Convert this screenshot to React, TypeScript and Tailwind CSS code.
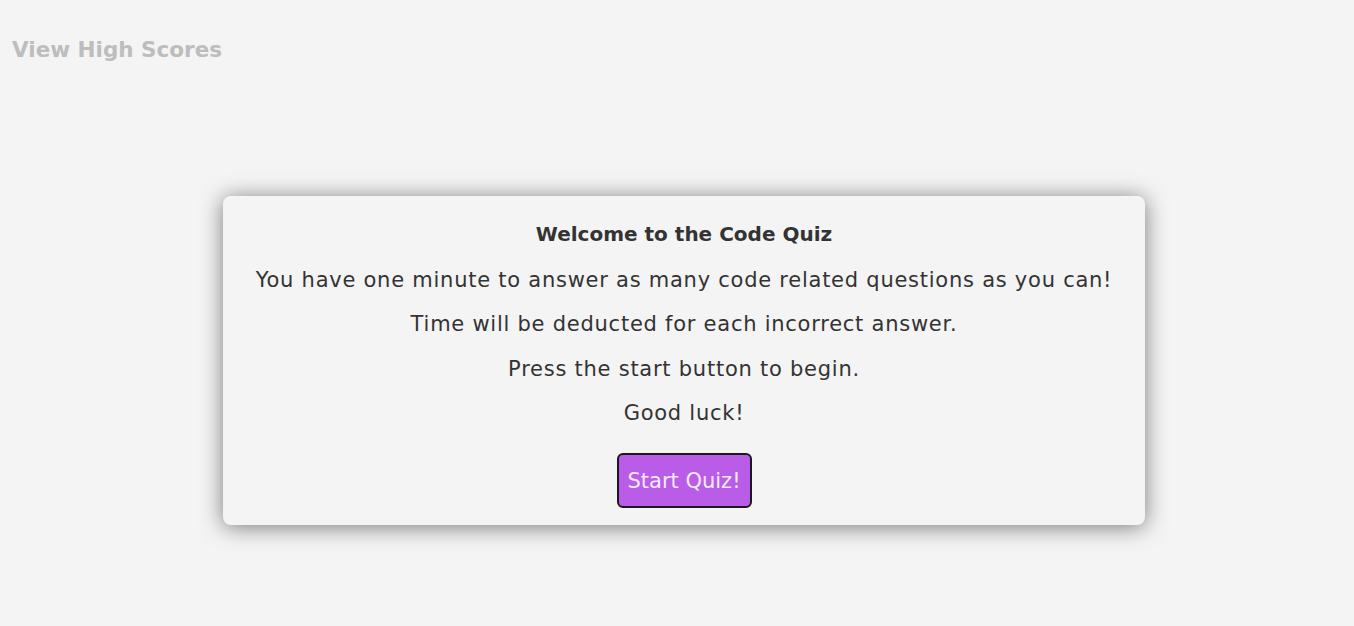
import React from "react";

const lines = [
  "You have one minute to answer as many code related questions as you can!",
  "Time will be deducted for each incorrect answer.",
  "Press the start button to begin.",
  "Good luck!",
];

export default function App() {
  return (
    <div
      className="min-h-[626px] bg-[#f4f4f4] text-[#333333]"
      style={{ fontFamily: '"DejaVu Sans", "Noto Sans", sans-serif' }}
    >
      <header className="px-3 pt-[34px]">
        <a className="text-[21.5px] font-bold leading-[32px] text-[#bdbdbd]">
          View High Scores
        </a>
      </header>

      <div className="flex justify-center pl-[14px] pt-[130px]">
        <div className="w-[922px] rounded-lg bg-[#f4f4f4] px-6 pt-[16px] pb-[17px] text-center shadow-[0_2px_22px_rgba(0,0,0,0.5)]">
          <h2 className="text-[20px] font-bold leading-[44.5px]">Welcome to the Code Quiz</h2>
          <div className="pt-px">
            {lines.map((line) => (
              <p key={line} className="text-[21px] leading-[44.5px] tracking-[0.75px]">
                {line}
              </p>
            ))}
          </div>
          <button className="mt-[17px] h-[55px] w-[135px] rounded-md border-2 border-[#1a1a1a] bg-[#b95ce8] pt-[4px] text-[21px] text-[#f6eafd]">
            Start Quiz!
          </button>
        </div>
      </div>
    </div>
  );
}
